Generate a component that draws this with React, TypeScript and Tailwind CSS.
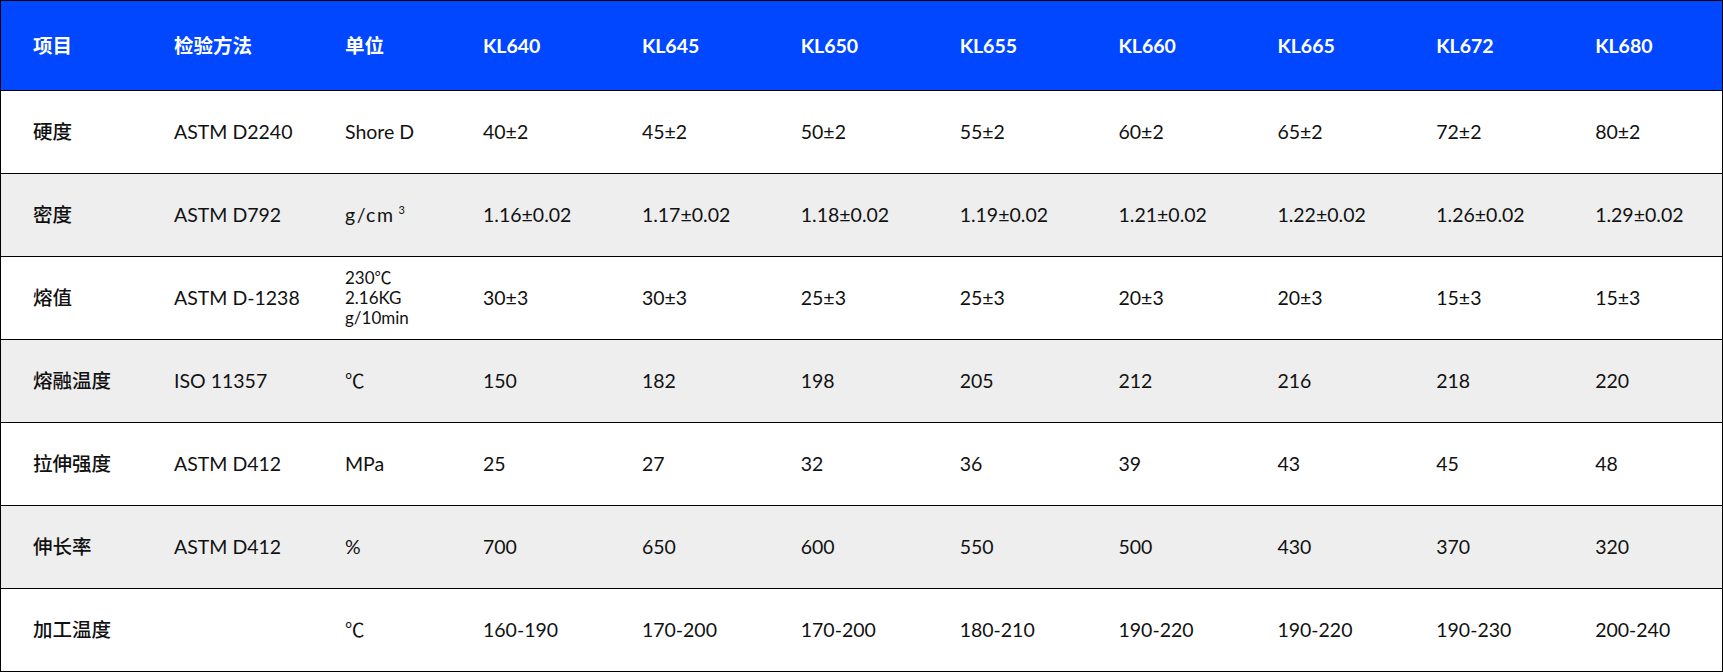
const models = ['KL640', 'KL645', 'KL650', 'KL655', 'KL660', 'KL665', 'KL672', 'KL680'];

type Row = {
  name: string;
  method: string;
  unit: React.ReactNode;
  values: string[];
  gray?: boolean;
};

const rows: Row[] = [
  {
    name: '硬度',
    method: 'ASTM D2240',
    unit: 'Shore D',
    values: ['40±2', '45±2', '50±2', '55±2', '60±2', '65±2', '72±2', '80±2'],
  },
  {
    name: '密度',
    method: 'ASTM D792',
    unit: (
      <span className="tracking-[1.5px]">
        g/cm<sup className="relative -top-[8px] ml-[4px] text-[11px]">3</sup>
      </span>
    ),
    values: ['1.16±0.02', '1.17±0.02', '1.18±0.02', '1.19±0.02', '1.21±0.02', '1.22±0.02', '1.26±0.02', '1.29±0.02'],
    gray: true,
  },
  {
    name: '熔值',
    method: 'ASTM D-1238',
    unit: (
      <div className="text-[17px] leading-[20px]">
        <div>230℃</div>
        <div>2.16KG</div>
        <div>g/10min</div>
      </div>
    ),
    values: ['30±3', '30±3', '25±3', '25±3', '20±3', '20±3', '15±3', '15±3'],
  },
  {
    name: '熔融温度',
    method: 'ISO 11357',
    unit: '℃',
    values: ['150', '182', '198', '205', '212', '216', '218', '220'],
    gray: true,
  },
  {
    name: '拉伸强度',
    method: 'ASTM D412',
    unit: 'MPa',
    values: ['25', '27', '32', '36', '39', '43', '45', '48'],
  },
  {
    name: '伸长率',
    method: 'ASTM D412',
    unit: '%',
    values: ['700', '650', '600', '550', '500', '430', '370', '320'],
    gray: true,
  },
  {
    name: '加工温度',
    method: '',
    unit: '℃',
    values: ['160-190', '170-200', '170-200', '180-210', '190-220', '190-220', '190-230', '200-240'],
  },
];

const grid = 'grid grid-cols-[141px_171px_138px_repeat(8,1fr)] items-center';

export default function App() {
  return (
    <div
      className="w-[1723px] h-[672px] border border-black bg-white text-[19.5px] text-[#111]"
      style={{ fontFamily: 'Lato, "Noto Sans CJK SC", sans-serif' }}
    >
      <div className={`${grid} h-[89px] bg-[#0047ff] font-bold text-white`}>
        <div className="pl-8">项目</div>
        <div className="pl-8">检验方法</div>
        <div className="pl-8">单位</div>
        {models.map((m) => (
          <div key={m} className="pl-8">
            {m}
          </div>
        ))}
      </div>
      {rows.map((r) => (
        <div
          key={r.name}
          className={`${grid} h-[83px] border-t border-black ${r.gray ? 'bg-[#eeeeee]' : 'bg-white'}`}
        >
          <div className="pl-8 font-medium">{r.name}</div>
          <div className="pl-8">{r.method}</div>
          <div className="pl-8">{r.unit}</div>
          {r.values.map((v, i) => (
            <div key={i} className="pl-8">
              {v}
            </div>
          ))}
        </div>
      ))}
    </div>
  );
}
